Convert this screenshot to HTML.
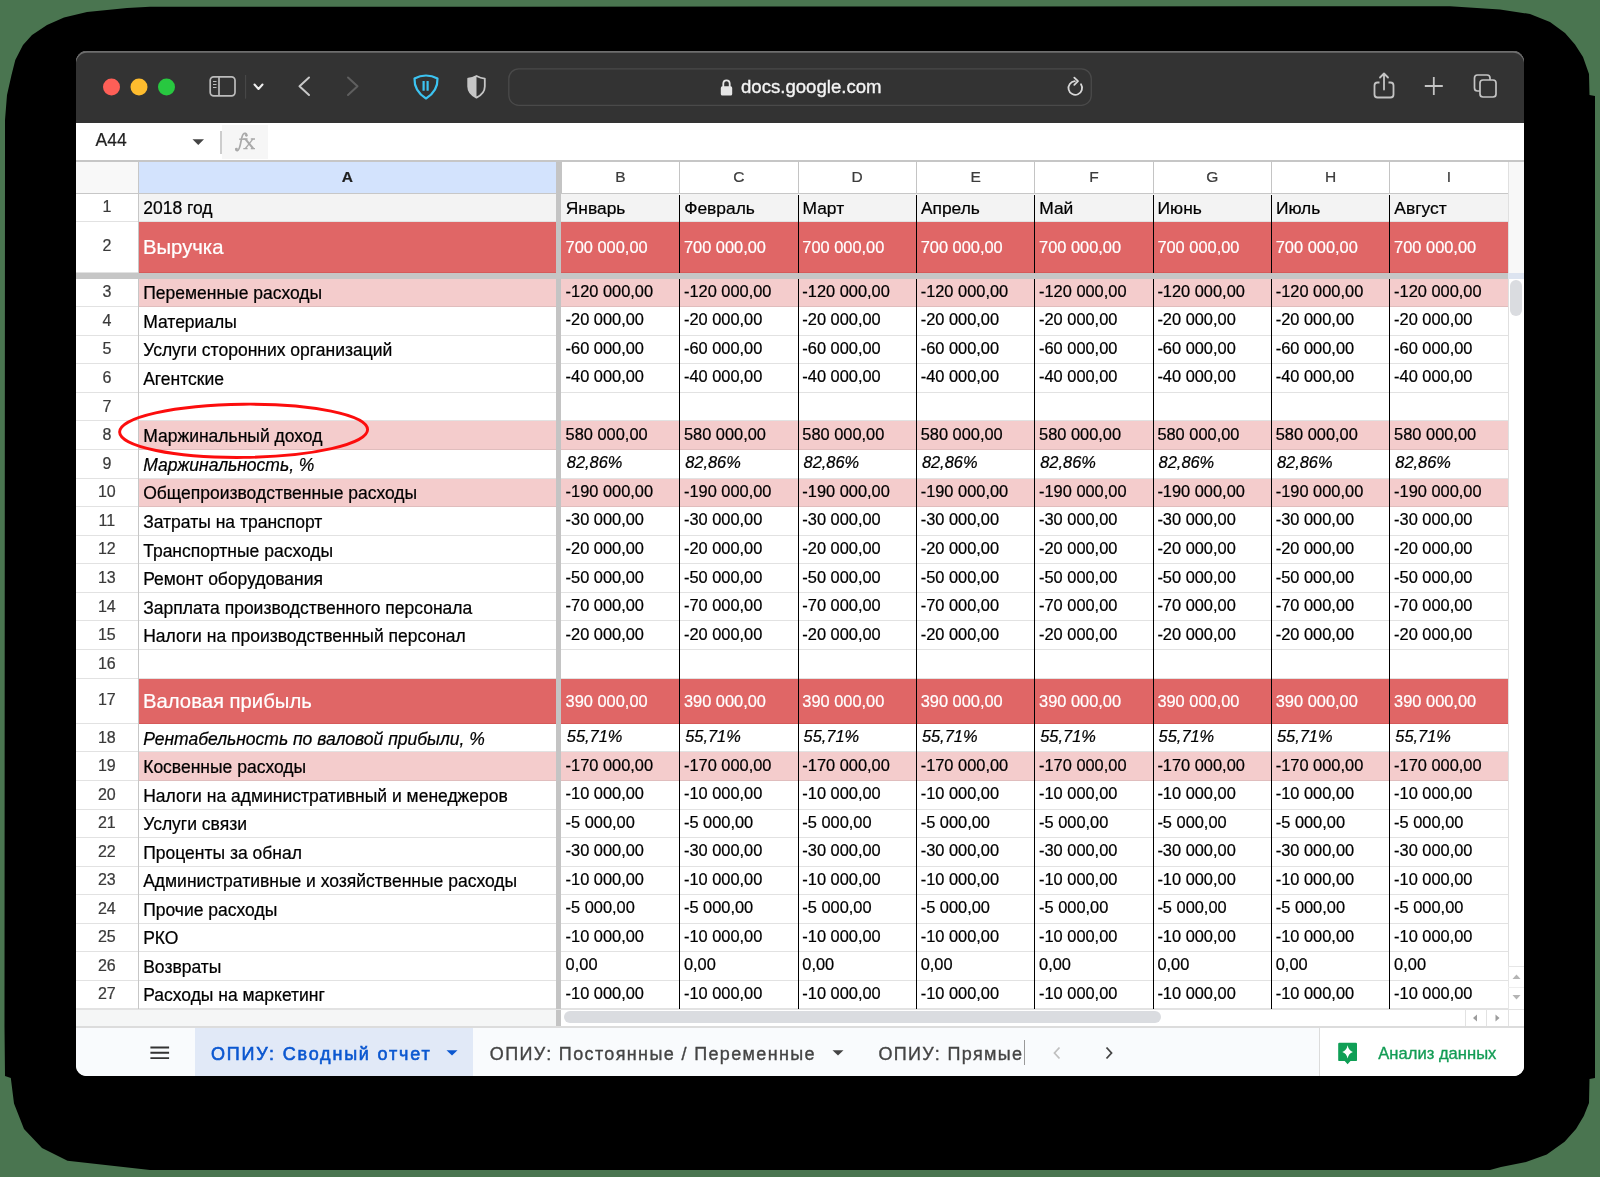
<!DOCTYPE html>
<html><head><meta charset="utf-8"><style>
html,body{margin:0;padding:0;}
body{width:1600px;height:1177px;position:relative;overflow:hidden;background:#4a7550;font-family:"Liberation Sans",sans-serif;}
body div{position:absolute;}
.shadow{left:4px;top:7px;right:5px;bottom:6px;background:#000;border-radius:88px;}
.win{left:76px;top:51px;width:1448px;height:1025px;background:#fff;border-radius:11px;}
#root{left:0;top:0;width:1600px;height:1177px;will-change:transform;}
.t{white-space:nowrap;-webkit-text-stroke:0.22px currentColor;}
.c{text-align:center;}
</style></head><body><div id="root">
<svg style="position:absolute;left:0;top:0" width="1600" height="1177"><path d="M5 150 L5 120 L7 95 L11.5 75 L15.3 60 L23 45 L32 35 L47 25 L64 17.5 L87 12 L127 8 L150 6.8 L1450 6.2 L1500 9.5 L1530 14 L1550 22 L1565 33 L1575 44.6 L1583 57 L1589 74 L1589.5 95 L1595 96 L1595 1078 L1589.5 1079 L1589 1103 L1583.8 1116 L1576 1129 L1564.6 1141.7 L1546.8 1154.4 L1526 1162 L1501 1167 L1490 1170 L150 1170 L67.5 1160.8 L42 1148 L24 1129 L14 1103.5 L10.8 1078 L5 1076 L4.5 1027Z" fill="#000"/></svg>
<div class="win"></div>
<div style="left:76.00px;top:51.30px;width:1448.00px;height:71.70px;background:#333;border-radius:11px 11px 0 0;box-shadow:inset 0 1.7px 0 #6e6e6e;"></div>
<div style="left:76.00px;top:123.00px;width:1448.00px;height:38.00px;background:#fff;"></div>
<div class="t" style="left:95.5px;top:132.49px;font-size:17.5px;line-height:17.5px;color:#1f1f1f;">A44</div>
<svg style="position:absolute;left:192px;top:138.5px" width="13" height="7"><path d="M0.5 0.3 L12 0.3 L6.25 6Z" fill="#444"/></svg>
<div style="left:220.30px;top:130.50px;width:1.90px;height:23.50px;background:#cdcdcd;"></div>
<div style="left:222.00px;top:125.00px;width:46.00px;height:33.60px;background:#f6f6f6;"></div>
<svg style="position:absolute;left:0;top:0" width="300" height="170"><path d="M246.6 135.6 C246.8 133.2 244.6 132.6 243.2 134.2 C242 135.6 241.6 138.6 240.7 142.8 C239.8 147 239.3 150.2 237.4 150.6 C236.4 150.8 235.6 150 236 149" stroke="#a9a9a9" stroke-width="1.7" fill="none" stroke-linecap="round"/><circle cx="246.3" cy="135.3" r="1.3" fill="#a9a9a9"/><circle cx="236.5" cy="149" r="1.3" fill="#a9a9a9"/><path d="M239.2 139.2 H244.8" stroke="#a9a9a9" stroke-width="1.4"/><path d="M245.2 138.9 L253.2 148.5" stroke="#a9a9a9" stroke-width="2"/><path d="M253 138.9 L245.4 148.5" stroke="#a9a9a9" stroke-width="1.3"/><path d="M243.3 139 H247.6 M250.8 139 H255 M243.3 148.6 H247.6 M250.8 148.6 H255" stroke="#a9a9a9" stroke-width="1.3"/></svg>
<div style="left:76.00px;top:160.20px;width:1448.00px;height:1.80px;background:#c6c6c6;"></div>
<div style="left:76.00px;top:162.00px;width:62.50px;height:32.00px;background:#f8f8f8;"></div>
<div style="left:138.50px;top:162.00px;width:417.50px;height:32.00px;background:#d3e3fd;"></div>
<div class="t c" style="left:138.5px;width:417.5px;top:169.08px;font-size:15.5px;line-height:15.5px;font-weight:bold;color:#1f1f1f;">A</div>
<div style="left:561.30px;top:162.00px;width:118.36px;height:32.00px;background:#fff;"></div>
<div class="t c" style="left:561.3px;width:118.36000000000001px;top:169.08px;font-size:15.5px;line-height:15.5px;color:#3c3c3c;">B</div>
<div style="left:679.66px;top:162.00px;width:118.36px;height:32.00px;background:#fff;"></div>
<div class="t c" style="left:679.66px;width:118.36000000000001px;top:169.08px;font-size:15.5px;line-height:15.5px;color:#3c3c3c;">C</div>
<div style="left:798.02px;top:162.00px;width:118.36px;height:32.00px;background:#fff;"></div>
<div class="t c" style="left:798.02px;width:118.3599999999999px;top:169.08px;font-size:15.5px;line-height:15.5px;color:#3c3c3c;">D</div>
<div style="left:916.38px;top:162.00px;width:118.36px;height:32.00px;background:#fff;"></div>
<div class="t c" style="left:916.3799999999999px;width:118.36000000000013px;top:169.08px;font-size:15.5px;line-height:15.5px;color:#3c3c3c;">E</div>
<div style="left:1034.74px;top:162.00px;width:118.36px;height:32.00px;background:#fff;"></div>
<div class="t c" style="left:1034.74px;width:118.3599999999999px;top:169.08px;font-size:15.5px;line-height:15.5px;color:#3c3c3c;">F</div>
<div style="left:1153.10px;top:162.00px;width:118.36px;height:32.00px;background:#fff;"></div>
<div class="t c" style="left:1153.1px;width:118.36000000000013px;top:169.08px;font-size:15.5px;line-height:15.5px;color:#3c3c3c;">G</div>
<div style="left:1271.46px;top:162.00px;width:118.36px;height:32.00px;background:#fff;"></div>
<div class="t c" style="left:1271.46px;width:118.3599999999999px;top:169.08px;font-size:15.5px;line-height:15.5px;color:#3c3c3c;">H</div>
<div style="left:1389.82px;top:162.00px;width:118.36px;height:32.00px;background:#fff;"></div>
<div class="t c" style="left:1389.82px;width:118.3599999999999px;top:169.08px;font-size:15.5px;line-height:15.5px;color:#3c3c3c;">I</div>
<div style="left:561.00px;top:161.00px;width:1.00px;height:33.00px;background:#c4c4c4;"></div>
<div style="left:679.00px;top:161.00px;width:1.00px;height:33.00px;background:#c4c4c4;"></div>
<div style="left:798.00px;top:161.00px;width:1.00px;height:33.00px;background:#c4c4c4;"></div>
<div style="left:916.00px;top:161.00px;width:1.00px;height:33.00px;background:#c4c4c4;"></div>
<div style="left:1034.00px;top:161.00px;width:1.00px;height:33.00px;background:#c4c4c4;"></div>
<div style="left:1153.00px;top:161.00px;width:1.00px;height:33.00px;background:#c4c4c4;"></div>
<div style="left:1271.00px;top:161.00px;width:1.00px;height:33.00px;background:#c4c4c4;"></div>
<div style="left:1389.00px;top:161.00px;width:1.00px;height:33.00px;background:#c4c4c4;"></div>
<div style="left:1508.00px;top:161.00px;width:1.00px;height:33.00px;background:#c4c4c4;"></div>
<div style="left:1508.18px;top:162.00px;width:15.82px;height:32.00px;background:#f8f8f8;"></div>
<div style="left:76.00px;top:193.20px;width:1432.18px;height:1.60px;background:#c7c7c7;"></div>
<div style="left:76.00px;top:194.00px;width:62.50px;height:28.00px;background:#fff;"></div>
<div class="t c" style="left:75.2px;width:63.3px;top:199.16px;font-size:16px;line-height:16px;color:#3a3a3a;">1</div>
<div style="left:138.50px;top:194.00px;width:1369.68px;height:28.00px;background:#f3f3f3;"></div>
<div style="left:76.00px;top:221.00px;width:62.50px;height:1.00px;background:#e2e2e2;"></div>
<div style="left:138.50px;top:221.00px;width:1369.68px;height:1.00px;background:#e2e2e2;"></div>
<div class="t" style="left:143.2px;top:200.19px;font-size:17.5px;line-height:17.5px;color:#000;">2018 год</div>
<div class="t" style="left:565.8px;top:199.97px;font-size:17.4px;line-height:17.4px;color:#000;">Январь</div>
<div class="t" style="left:684.16px;top:199.97px;font-size:17.4px;line-height:17.4px;color:#000;">Февраль</div>
<div class="t" style="left:802.52px;top:199.97px;font-size:17.4px;line-height:17.4px;color:#000;">Март</div>
<div class="t" style="left:920.8799999999999px;top:199.97px;font-size:17.4px;line-height:17.4px;color:#000;">Апрель</div>
<div class="t" style="left:1039.24px;top:199.97px;font-size:17.4px;line-height:17.4px;color:#000;">Май</div>
<div class="t" style="left:1157.6px;top:199.97px;font-size:17.4px;line-height:17.4px;color:#000;">Июнь</div>
<div class="t" style="left:1275.96px;top:199.97px;font-size:17.4px;line-height:17.4px;color:#000;">Июль</div>
<div class="t" style="left:1394.32px;top:199.97px;font-size:17.4px;line-height:17.4px;color:#000;">Август</div>
<div style="left:76.00px;top:222.00px;width:62.50px;height:51.00px;background:#fff;"></div>
<div class="t c" style="left:75.2px;width:63.3px;top:238.06px;font-size:16px;line-height:16px;color:#3a3a3a;">2</div>
<div style="left:138.50px;top:222.00px;width:1369.68px;height:51.00px;background:#e06666;"></div>
<div style="left:76.00px;top:272.00px;width:62.50px;height:1.00px;background:#e2e2e2;"></div>
<div style="left:138.50px;top:272.00px;width:1369.68px;height:1.00px;background:#d65a5a;"></div>
<div class="t" style="left:143px;top:237.02px;font-size:20.3px;line-height:20.3px;color:#fff;">Выручка</div>
<div class="t" style="left:565.5999999999999px;top:239.12px;font-size:16.4px;line-height:16.4px;color:#fff;">700 000,00</div>
<div class="t" style="left:683.9599999999999px;top:239.12px;font-size:16.4px;line-height:16.4px;color:#fff;">700 000,00</div>
<div class="t" style="left:802.3199999999999px;top:239.12px;font-size:16.4px;line-height:16.4px;color:#fff;">700 000,00</div>
<div class="t" style="left:920.6799999999998px;top:239.12px;font-size:16.4px;line-height:16.4px;color:#fff;">700 000,00</div>
<div class="t" style="left:1039.04px;top:239.12px;font-size:16.4px;line-height:16.4px;color:#fff;">700 000,00</div>
<div class="t" style="left:1157.3999999999999px;top:239.12px;font-size:16.4px;line-height:16.4px;color:#fff;">700 000,00</div>
<div class="t" style="left:1275.76px;top:239.12px;font-size:16.4px;line-height:16.4px;color:#fff;">700 000,00</div>
<div class="t" style="left:1394.12px;top:239.12px;font-size:16.4px;line-height:16.4px;color:#fff;">700 000,00</div>
<div style="left:76.00px;top:278.41px;width:62.50px;height:28.59px;background:#fff;"></div>
<div class="t c" style="left:75.2px;width:63.3px;top:284.16px;font-size:16px;line-height:16px;color:#3a3a3a;">3</div>
<div style="left:138.50px;top:278.41px;width:1369.68px;height:28.59px;background:#f4cccc;"></div>
<div style="left:76.00px;top:306.00px;width:62.50px;height:1.00px;background:#e2e2e2;"></div>
<div style="left:138.50px;top:306.00px;width:1369.68px;height:1.00px;background:#e0bdbd;"></div>
<div class="t" style="left:143.2px;top:285.19px;font-size:17.5px;line-height:17.5px;color:#000;">Переменные расходы</div>
<div class="t" style="left:565.5999999999999px;top:282.72px;font-size:16.4px;line-height:16.4px;color:#000;">-120 000,00</div>
<div class="t" style="left:683.9599999999999px;top:282.72px;font-size:16.4px;line-height:16.4px;color:#000;">-120 000,00</div>
<div class="t" style="left:802.3199999999999px;top:282.72px;font-size:16.4px;line-height:16.4px;color:#000;">-120 000,00</div>
<div class="t" style="left:920.6799999999998px;top:282.72px;font-size:16.4px;line-height:16.4px;color:#000;">-120 000,00</div>
<div class="t" style="left:1039.04px;top:282.72px;font-size:16.4px;line-height:16.4px;color:#000;">-120 000,00</div>
<div class="t" style="left:1157.3999999999999px;top:282.72px;font-size:16.4px;line-height:16.4px;color:#000;">-120 000,00</div>
<div class="t" style="left:1275.76px;top:282.72px;font-size:16.4px;line-height:16.4px;color:#000;">-120 000,00</div>
<div class="t" style="left:1394.12px;top:282.72px;font-size:16.4px;line-height:16.4px;color:#000;">-120 000,00</div>
<div style="left:76.00px;top:307.00px;width:62.50px;height:28.59px;background:#fff;"></div>
<div class="t c" style="left:75.2px;width:63.3px;top:312.75px;font-size:16px;line-height:16px;color:#3a3a3a;">4</div>
<div style="left:138.50px;top:307.00px;width:1369.68px;height:28.59px;background:#ffffff;"></div>
<div style="left:76.00px;top:334.59px;width:62.50px;height:1.00px;background:#e2e2e2;"></div>
<div style="left:138.50px;top:334.59px;width:1369.68px;height:1.00px;background:#e2e2e2;"></div>
<div class="t" style="left:143.2px;top:313.78px;font-size:17.5px;line-height:17.5px;color:#000;">Материалы</div>
<div class="t" style="left:565.5999999999999px;top:311.31px;font-size:16.4px;line-height:16.4px;color:#000;">-20 000,00</div>
<div class="t" style="left:683.9599999999999px;top:311.31px;font-size:16.4px;line-height:16.4px;color:#000;">-20 000,00</div>
<div class="t" style="left:802.3199999999999px;top:311.31px;font-size:16.4px;line-height:16.4px;color:#000;">-20 000,00</div>
<div class="t" style="left:920.6799999999998px;top:311.31px;font-size:16.4px;line-height:16.4px;color:#000;">-20 000,00</div>
<div class="t" style="left:1039.04px;top:311.31px;font-size:16.4px;line-height:16.4px;color:#000;">-20 000,00</div>
<div class="t" style="left:1157.3999999999999px;top:311.31px;font-size:16.4px;line-height:16.4px;color:#000;">-20 000,00</div>
<div class="t" style="left:1275.76px;top:311.31px;font-size:16.4px;line-height:16.4px;color:#000;">-20 000,00</div>
<div class="t" style="left:1394.12px;top:311.31px;font-size:16.4px;line-height:16.4px;color:#000;">-20 000,00</div>
<div style="left:76.00px;top:335.59px;width:62.50px;height:28.59px;background:#fff;"></div>
<div class="t c" style="left:75.2px;width:63.3px;top:341.34px;font-size:16px;line-height:16px;color:#3a3a3a;">5</div>
<div style="left:138.50px;top:335.59px;width:1369.68px;height:28.59px;background:#ffffff;"></div>
<div style="left:76.00px;top:363.18px;width:62.50px;height:1.00px;background:#e2e2e2;"></div>
<div style="left:138.50px;top:363.18px;width:1369.68px;height:1.00px;background:#e2e2e2;"></div>
<div class="t" style="left:143.2px;top:342.37px;font-size:17.5px;line-height:17.5px;color:#000;">Услуги сторонних организаций</div>
<div class="t" style="left:565.5999999999999px;top:339.90px;font-size:16.4px;line-height:16.4px;color:#000;">-60 000,00</div>
<div class="t" style="left:683.9599999999999px;top:339.90px;font-size:16.4px;line-height:16.4px;color:#000;">-60 000,00</div>
<div class="t" style="left:802.3199999999999px;top:339.90px;font-size:16.4px;line-height:16.4px;color:#000;">-60 000,00</div>
<div class="t" style="left:920.6799999999998px;top:339.90px;font-size:16.4px;line-height:16.4px;color:#000;">-60 000,00</div>
<div class="t" style="left:1039.04px;top:339.90px;font-size:16.4px;line-height:16.4px;color:#000;">-60 000,00</div>
<div class="t" style="left:1157.3999999999999px;top:339.90px;font-size:16.4px;line-height:16.4px;color:#000;">-60 000,00</div>
<div class="t" style="left:1275.76px;top:339.90px;font-size:16.4px;line-height:16.4px;color:#000;">-60 000,00</div>
<div class="t" style="left:1394.12px;top:339.90px;font-size:16.4px;line-height:16.4px;color:#000;">-60 000,00</div>
<div style="left:76.00px;top:364.18px;width:62.50px;height:28.59px;background:#fff;"></div>
<div class="t c" style="left:75.2px;width:63.3px;top:369.93px;font-size:16px;line-height:16px;color:#3a3a3a;">6</div>
<div style="left:138.50px;top:364.18px;width:1369.68px;height:28.59px;background:#ffffff;"></div>
<div style="left:76.00px;top:391.77px;width:62.50px;height:1.00px;background:#e2e2e2;"></div>
<div style="left:138.50px;top:391.77px;width:1369.68px;height:1.00px;background:#e2e2e2;"></div>
<div class="t" style="left:143.2px;top:370.96px;font-size:17.5px;line-height:17.5px;color:#000;">Агентские</div>
<div class="t" style="left:565.5999999999999px;top:368.49px;font-size:16.4px;line-height:16.4px;color:#000;">-40 000,00</div>
<div class="t" style="left:683.9599999999999px;top:368.49px;font-size:16.4px;line-height:16.4px;color:#000;">-40 000,00</div>
<div class="t" style="left:802.3199999999999px;top:368.49px;font-size:16.4px;line-height:16.4px;color:#000;">-40 000,00</div>
<div class="t" style="left:920.6799999999998px;top:368.49px;font-size:16.4px;line-height:16.4px;color:#000;">-40 000,00</div>
<div class="t" style="left:1039.04px;top:368.49px;font-size:16.4px;line-height:16.4px;color:#000;">-40 000,00</div>
<div class="t" style="left:1157.3999999999999px;top:368.49px;font-size:16.4px;line-height:16.4px;color:#000;">-40 000,00</div>
<div class="t" style="left:1275.76px;top:368.49px;font-size:16.4px;line-height:16.4px;color:#000;">-40 000,00</div>
<div class="t" style="left:1394.12px;top:368.49px;font-size:16.4px;line-height:16.4px;color:#000;">-40 000,00</div>
<div style="left:76.00px;top:392.77px;width:62.50px;height:28.59px;background:#fff;"></div>
<div class="t c" style="left:75.2px;width:63.3px;top:398.52px;font-size:16px;line-height:16px;color:#3a3a3a;">7</div>
<div style="left:138.50px;top:392.77px;width:1369.68px;height:28.59px;background:#ffffff;"></div>
<div style="left:76.00px;top:420.36px;width:62.50px;height:1.00px;background:#e2e2e2;"></div>
<div style="left:138.50px;top:420.36px;width:1369.68px;height:1.00px;background:#e2e2e2;"></div>
<div class="t" style="left:143.2px;top:399.55px;font-size:17.5px;line-height:17.5px;color:#000;"></div>
<div class="t" style="left:565.5999999999999px;top:397.08px;font-size:16.4px;line-height:16.4px;color:#000;"></div>
<div class="t" style="left:683.9599999999999px;top:397.08px;font-size:16.4px;line-height:16.4px;color:#000;"></div>
<div class="t" style="left:802.3199999999999px;top:397.08px;font-size:16.4px;line-height:16.4px;color:#000;"></div>
<div class="t" style="left:920.6799999999998px;top:397.08px;font-size:16.4px;line-height:16.4px;color:#000;"></div>
<div class="t" style="left:1039.04px;top:397.08px;font-size:16.4px;line-height:16.4px;color:#000;"></div>
<div class="t" style="left:1157.3999999999999px;top:397.08px;font-size:16.4px;line-height:16.4px;color:#000;"></div>
<div class="t" style="left:1275.76px;top:397.08px;font-size:16.4px;line-height:16.4px;color:#000;"></div>
<div class="t" style="left:1394.12px;top:397.08px;font-size:16.4px;line-height:16.4px;color:#000;"></div>
<div style="left:76.00px;top:421.36px;width:62.50px;height:28.59px;background:#fff;"></div>
<div class="t c" style="left:75.2px;width:63.3px;top:427.11px;font-size:16px;line-height:16px;color:#3a3a3a;">8</div>
<div style="left:138.50px;top:421.36px;width:1369.68px;height:28.59px;background:#f4cccc;"></div>
<div style="left:76.00px;top:448.95px;width:62.50px;height:1.00px;background:#e2e2e2;"></div>
<div style="left:138.50px;top:448.95px;width:1369.68px;height:1.00px;background:#e0bdbd;"></div>
<div class="t" style="left:143.2px;top:428.14px;font-size:17.5px;line-height:17.5px;color:#000;">Маржинальный доход</div>
<div class="t" style="left:565.5999999999999px;top:425.67px;font-size:16.4px;line-height:16.4px;color:#000;">580 000,00</div>
<div class="t" style="left:683.9599999999999px;top:425.67px;font-size:16.4px;line-height:16.4px;color:#000;">580 000,00</div>
<div class="t" style="left:802.3199999999999px;top:425.67px;font-size:16.4px;line-height:16.4px;color:#000;">580 000,00</div>
<div class="t" style="left:920.6799999999998px;top:425.67px;font-size:16.4px;line-height:16.4px;color:#000;">580 000,00</div>
<div class="t" style="left:1039.04px;top:425.67px;font-size:16.4px;line-height:16.4px;color:#000;">580 000,00</div>
<div class="t" style="left:1157.3999999999999px;top:425.67px;font-size:16.4px;line-height:16.4px;color:#000;">580 000,00</div>
<div class="t" style="left:1275.76px;top:425.67px;font-size:16.4px;line-height:16.4px;color:#000;">580 000,00</div>
<div class="t" style="left:1394.12px;top:425.67px;font-size:16.4px;line-height:16.4px;color:#000;">580 000,00</div>
<div style="left:76.00px;top:449.95px;width:62.50px;height:28.59px;background:#fff;"></div>
<div class="t c" style="left:75.2px;width:63.3px;top:455.70px;font-size:16px;line-height:16px;color:#3a3a3a;">9</div>
<div style="left:138.50px;top:449.95px;width:1369.68px;height:28.59px;background:#ffffff;"></div>
<div style="left:76.00px;top:477.54px;width:62.50px;height:1.00px;background:#e2e2e2;"></div>
<div style="left:138.50px;top:477.54px;width:1369.68px;height:1.00px;background:#e2e2e2;"></div>
<div class="t" style="left:143.2px;top:456.73px;font-size:17.5px;line-height:17.5px;color:#000;font-style:italic;">Маржинальность, %</div>
<div class="t" style="left:566.8px;top:454.16px;font-size:16.4px;line-height:16.4px;color:#000;font-style:italic;">82,86%</div>
<div class="t" style="left:685.16px;top:454.16px;font-size:16.4px;line-height:16.4px;color:#000;font-style:italic;">82,86%</div>
<div class="t" style="left:803.52px;top:454.16px;font-size:16.4px;line-height:16.4px;color:#000;font-style:italic;">82,86%</div>
<div class="t" style="left:921.8799999999999px;top:454.16px;font-size:16.4px;line-height:16.4px;color:#000;font-style:italic;">82,86%</div>
<div class="t" style="left:1040.24px;top:454.16px;font-size:16.4px;line-height:16.4px;color:#000;font-style:italic;">82,86%</div>
<div class="t" style="left:1158.6px;top:454.16px;font-size:16.4px;line-height:16.4px;color:#000;font-style:italic;">82,86%</div>
<div class="t" style="left:1276.96px;top:454.16px;font-size:16.4px;line-height:16.4px;color:#000;font-style:italic;">82,86%</div>
<div class="t" style="left:1395.32px;top:454.16px;font-size:16.4px;line-height:16.4px;color:#000;font-style:italic;">82,86%</div>
<div style="left:76.00px;top:478.54px;width:62.50px;height:28.59px;background:#fff;"></div>
<div class="t c" style="left:75.2px;width:63.3px;top:484.29px;font-size:16px;line-height:16px;color:#3a3a3a;">10</div>
<div style="left:138.50px;top:478.54px;width:1369.68px;height:28.59px;background:#f4cccc;"></div>
<div style="left:76.00px;top:506.13px;width:62.50px;height:1.00px;background:#e2e2e2;"></div>
<div style="left:138.50px;top:506.13px;width:1369.68px;height:1.00px;background:#e0bdbd;"></div>
<div class="t" style="left:143.2px;top:485.32px;font-size:17.5px;line-height:17.5px;color:#000;">Общепроизводственные расходы</div>
<div class="t" style="left:565.5999999999999px;top:482.85px;font-size:16.4px;line-height:16.4px;color:#000;">-190 000,00</div>
<div class="t" style="left:683.9599999999999px;top:482.85px;font-size:16.4px;line-height:16.4px;color:#000;">-190 000,00</div>
<div class="t" style="left:802.3199999999999px;top:482.85px;font-size:16.4px;line-height:16.4px;color:#000;">-190 000,00</div>
<div class="t" style="left:920.6799999999998px;top:482.85px;font-size:16.4px;line-height:16.4px;color:#000;">-190 000,00</div>
<div class="t" style="left:1039.04px;top:482.85px;font-size:16.4px;line-height:16.4px;color:#000;">-190 000,00</div>
<div class="t" style="left:1157.3999999999999px;top:482.85px;font-size:16.4px;line-height:16.4px;color:#000;">-190 000,00</div>
<div class="t" style="left:1275.76px;top:482.85px;font-size:16.4px;line-height:16.4px;color:#000;">-190 000,00</div>
<div class="t" style="left:1394.12px;top:482.85px;font-size:16.4px;line-height:16.4px;color:#000;">-190 000,00</div>
<div style="left:76.00px;top:507.13px;width:62.50px;height:28.59px;background:#fff;"></div>
<div class="t c" style="left:75.2px;width:63.3px;top:512.88px;font-size:16px;line-height:16px;color:#3a3a3a;">11</div>
<div style="left:138.50px;top:507.13px;width:1369.68px;height:28.59px;background:#ffffff;"></div>
<div style="left:76.00px;top:534.72px;width:62.50px;height:1.00px;background:#e2e2e2;"></div>
<div style="left:138.50px;top:534.72px;width:1369.68px;height:1.00px;background:#e2e2e2;"></div>
<div class="t" style="left:143.2px;top:513.91px;font-size:17.5px;line-height:17.5px;color:#000;">Затраты на транспорт</div>
<div class="t" style="left:565.5999999999999px;top:511.44px;font-size:16.4px;line-height:16.4px;color:#000;">-30 000,00</div>
<div class="t" style="left:683.9599999999999px;top:511.44px;font-size:16.4px;line-height:16.4px;color:#000;">-30 000,00</div>
<div class="t" style="left:802.3199999999999px;top:511.44px;font-size:16.4px;line-height:16.4px;color:#000;">-30 000,00</div>
<div class="t" style="left:920.6799999999998px;top:511.44px;font-size:16.4px;line-height:16.4px;color:#000;">-30 000,00</div>
<div class="t" style="left:1039.04px;top:511.44px;font-size:16.4px;line-height:16.4px;color:#000;">-30 000,00</div>
<div class="t" style="left:1157.3999999999999px;top:511.44px;font-size:16.4px;line-height:16.4px;color:#000;">-30 000,00</div>
<div class="t" style="left:1275.76px;top:511.44px;font-size:16.4px;line-height:16.4px;color:#000;">-30 000,00</div>
<div class="t" style="left:1394.12px;top:511.44px;font-size:16.4px;line-height:16.4px;color:#000;">-30 000,00</div>
<div style="left:76.00px;top:535.72px;width:62.50px;height:28.59px;background:#fff;"></div>
<div class="t c" style="left:75.2px;width:63.3px;top:541.47px;font-size:16px;line-height:16px;color:#3a3a3a;">12</div>
<div style="left:138.50px;top:535.72px;width:1369.68px;height:28.59px;background:#ffffff;"></div>
<div style="left:76.00px;top:563.31px;width:62.50px;height:1.00px;background:#e2e2e2;"></div>
<div style="left:138.50px;top:563.31px;width:1369.68px;height:1.00px;background:#e2e2e2;"></div>
<div class="t" style="left:143.2px;top:542.50px;font-size:17.5px;line-height:17.5px;color:#000;">Транспортные расходы</div>
<div class="t" style="left:565.5999999999999px;top:540.03px;font-size:16.4px;line-height:16.4px;color:#000;">-20 000,00</div>
<div class="t" style="left:683.9599999999999px;top:540.03px;font-size:16.4px;line-height:16.4px;color:#000;">-20 000,00</div>
<div class="t" style="left:802.3199999999999px;top:540.03px;font-size:16.4px;line-height:16.4px;color:#000;">-20 000,00</div>
<div class="t" style="left:920.6799999999998px;top:540.03px;font-size:16.4px;line-height:16.4px;color:#000;">-20 000,00</div>
<div class="t" style="left:1039.04px;top:540.03px;font-size:16.4px;line-height:16.4px;color:#000;">-20 000,00</div>
<div class="t" style="left:1157.3999999999999px;top:540.03px;font-size:16.4px;line-height:16.4px;color:#000;">-20 000,00</div>
<div class="t" style="left:1275.76px;top:540.03px;font-size:16.4px;line-height:16.4px;color:#000;">-20 000,00</div>
<div class="t" style="left:1394.12px;top:540.03px;font-size:16.4px;line-height:16.4px;color:#000;">-20 000,00</div>
<div style="left:76.00px;top:564.31px;width:62.50px;height:28.59px;background:#fff;"></div>
<div class="t c" style="left:75.2px;width:63.3px;top:570.06px;font-size:16px;line-height:16px;color:#3a3a3a;">13</div>
<div style="left:138.50px;top:564.31px;width:1369.68px;height:28.59px;background:#ffffff;"></div>
<div style="left:76.00px;top:591.90px;width:62.50px;height:1.00px;background:#e2e2e2;"></div>
<div style="left:138.50px;top:591.90px;width:1369.68px;height:1.00px;background:#e2e2e2;"></div>
<div class="t" style="left:143.2px;top:571.09px;font-size:17.5px;line-height:17.5px;color:#000;">Ремонт оборудования</div>
<div class="t" style="left:565.5999999999999px;top:568.62px;font-size:16.4px;line-height:16.4px;color:#000;">-50 000,00</div>
<div class="t" style="left:683.9599999999999px;top:568.62px;font-size:16.4px;line-height:16.4px;color:#000;">-50 000,00</div>
<div class="t" style="left:802.3199999999999px;top:568.62px;font-size:16.4px;line-height:16.4px;color:#000;">-50 000,00</div>
<div class="t" style="left:920.6799999999998px;top:568.62px;font-size:16.4px;line-height:16.4px;color:#000;">-50 000,00</div>
<div class="t" style="left:1039.04px;top:568.62px;font-size:16.4px;line-height:16.4px;color:#000;">-50 000,00</div>
<div class="t" style="left:1157.3999999999999px;top:568.62px;font-size:16.4px;line-height:16.4px;color:#000;">-50 000,00</div>
<div class="t" style="left:1275.76px;top:568.62px;font-size:16.4px;line-height:16.4px;color:#000;">-50 000,00</div>
<div class="t" style="left:1394.12px;top:568.62px;font-size:16.4px;line-height:16.4px;color:#000;">-50 000,00</div>
<div style="left:76.00px;top:592.90px;width:62.50px;height:28.59px;background:#fff;"></div>
<div class="t c" style="left:75.2px;width:63.3px;top:598.65px;font-size:16px;line-height:16px;color:#3a3a3a;">14</div>
<div style="left:138.50px;top:592.90px;width:1369.68px;height:28.59px;background:#ffffff;"></div>
<div style="left:76.00px;top:620.49px;width:62.50px;height:1.00px;background:#e2e2e2;"></div>
<div style="left:138.50px;top:620.49px;width:1369.68px;height:1.00px;background:#e2e2e2;"></div>
<div class="t" style="left:143.2px;top:599.68px;font-size:17.5px;line-height:17.5px;color:#000;">Зарплата производственного персонала</div>
<div class="t" style="left:565.5999999999999px;top:597.21px;font-size:16.4px;line-height:16.4px;color:#000;">-70 000,00</div>
<div class="t" style="left:683.9599999999999px;top:597.21px;font-size:16.4px;line-height:16.4px;color:#000;">-70 000,00</div>
<div class="t" style="left:802.3199999999999px;top:597.21px;font-size:16.4px;line-height:16.4px;color:#000;">-70 000,00</div>
<div class="t" style="left:920.6799999999998px;top:597.21px;font-size:16.4px;line-height:16.4px;color:#000;">-70 000,00</div>
<div class="t" style="left:1039.04px;top:597.21px;font-size:16.4px;line-height:16.4px;color:#000;">-70 000,00</div>
<div class="t" style="left:1157.3999999999999px;top:597.21px;font-size:16.4px;line-height:16.4px;color:#000;">-70 000,00</div>
<div class="t" style="left:1275.76px;top:597.21px;font-size:16.4px;line-height:16.4px;color:#000;">-70 000,00</div>
<div class="t" style="left:1394.12px;top:597.21px;font-size:16.4px;line-height:16.4px;color:#000;">-70 000,00</div>
<div style="left:76.00px;top:621.49px;width:62.50px;height:28.59px;background:#fff;"></div>
<div class="t c" style="left:75.2px;width:63.3px;top:627.24px;font-size:16px;line-height:16px;color:#3a3a3a;">15</div>
<div style="left:138.50px;top:621.49px;width:1369.68px;height:28.59px;background:#ffffff;"></div>
<div style="left:76.00px;top:649.08px;width:62.50px;height:1.00px;background:#e2e2e2;"></div>
<div style="left:138.50px;top:649.08px;width:1369.68px;height:1.00px;background:#e2e2e2;"></div>
<div class="t" style="left:143.2px;top:628.27px;font-size:17.5px;line-height:17.5px;color:#000;">Налоги на производственный персонал</div>
<div class="t" style="left:565.5999999999999px;top:625.80px;font-size:16.4px;line-height:16.4px;color:#000;">-20 000,00</div>
<div class="t" style="left:683.9599999999999px;top:625.80px;font-size:16.4px;line-height:16.4px;color:#000;">-20 000,00</div>
<div class="t" style="left:802.3199999999999px;top:625.80px;font-size:16.4px;line-height:16.4px;color:#000;">-20 000,00</div>
<div class="t" style="left:920.6799999999998px;top:625.80px;font-size:16.4px;line-height:16.4px;color:#000;">-20 000,00</div>
<div class="t" style="left:1039.04px;top:625.80px;font-size:16.4px;line-height:16.4px;color:#000;">-20 000,00</div>
<div class="t" style="left:1157.3999999999999px;top:625.80px;font-size:16.4px;line-height:16.4px;color:#000;">-20 000,00</div>
<div class="t" style="left:1275.76px;top:625.80px;font-size:16.4px;line-height:16.4px;color:#000;">-20 000,00</div>
<div class="t" style="left:1394.12px;top:625.80px;font-size:16.4px;line-height:16.4px;color:#000;">-20 000,00</div>
<div style="left:76.00px;top:650.08px;width:62.50px;height:28.59px;background:#fff;"></div>
<div class="t c" style="left:75.2px;width:63.3px;top:655.83px;font-size:16px;line-height:16px;color:#3a3a3a;">16</div>
<div style="left:138.50px;top:650.08px;width:1369.68px;height:28.59px;background:#ffffff;"></div>
<div style="left:76.00px;top:677.67px;width:62.50px;height:1.00px;background:#e2e2e2;"></div>
<div style="left:138.50px;top:677.67px;width:1369.68px;height:1.00px;background:#e2e2e2;"></div>
<div class="t" style="left:143.2px;top:656.86px;font-size:17.5px;line-height:17.5px;color:#000;"></div>
<div class="t" style="left:565.5999999999999px;top:654.39px;font-size:16.4px;line-height:16.4px;color:#000;"></div>
<div class="t" style="left:683.9599999999999px;top:654.39px;font-size:16.4px;line-height:16.4px;color:#000;"></div>
<div class="t" style="left:802.3199999999999px;top:654.39px;font-size:16.4px;line-height:16.4px;color:#000;"></div>
<div class="t" style="left:920.6799999999998px;top:654.39px;font-size:16.4px;line-height:16.4px;color:#000;"></div>
<div class="t" style="left:1039.04px;top:654.39px;font-size:16.4px;line-height:16.4px;color:#000;"></div>
<div class="t" style="left:1157.3999999999999px;top:654.39px;font-size:16.4px;line-height:16.4px;color:#000;"></div>
<div class="t" style="left:1275.76px;top:654.39px;font-size:16.4px;line-height:16.4px;color:#000;"></div>
<div class="t" style="left:1394.12px;top:654.39px;font-size:16.4px;line-height:16.4px;color:#000;"></div>
<div style="left:76.00px;top:678.67px;width:62.50px;height:45.23px;background:#fff;"></div>
<div class="t c" style="left:75.2px;width:63.3px;top:691.84px;font-size:16px;line-height:16px;color:#3a3a3a;">17</div>
<div style="left:138.50px;top:678.67px;width:1369.68px;height:45.23px;background:#e06666;"></div>
<div style="left:76.00px;top:722.90px;width:62.50px;height:1.00px;background:#e2e2e2;"></div>
<div style="left:138.50px;top:722.90px;width:1369.68px;height:1.00px;background:#d65a5a;"></div>
<div class="t" style="left:143px;top:690.80px;font-size:20.3px;line-height:20.3px;color:#fff;">Валовая прибыль</div>
<div class="t" style="left:565.5999999999999px;top:692.90px;font-size:16.4px;line-height:16.4px;color:#fff;">390 000,00</div>
<div class="t" style="left:683.9599999999999px;top:692.90px;font-size:16.4px;line-height:16.4px;color:#fff;">390 000,00</div>
<div class="t" style="left:802.3199999999999px;top:692.90px;font-size:16.4px;line-height:16.4px;color:#fff;">390 000,00</div>
<div class="t" style="left:920.6799999999998px;top:692.90px;font-size:16.4px;line-height:16.4px;color:#fff;">390 000,00</div>
<div class="t" style="left:1039.04px;top:692.90px;font-size:16.4px;line-height:16.4px;color:#fff;">390 000,00</div>
<div class="t" style="left:1157.3999999999999px;top:692.90px;font-size:16.4px;line-height:16.4px;color:#fff;">390 000,00</div>
<div class="t" style="left:1275.76px;top:692.90px;font-size:16.4px;line-height:16.4px;color:#fff;">390 000,00</div>
<div class="t" style="left:1394.12px;top:692.90px;font-size:16.4px;line-height:16.4px;color:#fff;">390 000,00</div>
<div style="left:76.00px;top:723.90px;width:62.50px;height:28.54px;background:#fff;"></div>
<div class="t c" style="left:75.2px;width:63.3px;top:729.60px;font-size:16px;line-height:16px;color:#3a3a3a;">18</div>
<div style="left:138.50px;top:723.90px;width:1369.68px;height:28.54px;background:#ffffff;"></div>
<div style="left:76.00px;top:751.44px;width:62.50px;height:1.00px;background:#e2e2e2;"></div>
<div style="left:138.50px;top:751.44px;width:1369.68px;height:1.00px;background:#e2e2e2;"></div>
<div class="t" style="left:143.2px;top:730.63px;font-size:17.5px;line-height:17.5px;color:#000;font-style:italic;">Рентабельность по валовой прибыли, %</div>
<div class="t" style="left:566.8px;top:728.06px;font-size:16.4px;line-height:16.4px;color:#000;font-style:italic;">55,71%</div>
<div class="t" style="left:685.16px;top:728.06px;font-size:16.4px;line-height:16.4px;color:#000;font-style:italic;">55,71%</div>
<div class="t" style="left:803.52px;top:728.06px;font-size:16.4px;line-height:16.4px;color:#000;font-style:italic;">55,71%</div>
<div class="t" style="left:921.8799999999999px;top:728.06px;font-size:16.4px;line-height:16.4px;color:#000;font-style:italic;">55,71%</div>
<div class="t" style="left:1040.24px;top:728.06px;font-size:16.4px;line-height:16.4px;color:#000;font-style:italic;">55,71%</div>
<div class="t" style="left:1158.6px;top:728.06px;font-size:16.4px;line-height:16.4px;color:#000;font-style:italic;">55,71%</div>
<div class="t" style="left:1276.96px;top:728.06px;font-size:16.4px;line-height:16.4px;color:#000;font-style:italic;">55,71%</div>
<div class="t" style="left:1395.32px;top:728.06px;font-size:16.4px;line-height:16.4px;color:#000;font-style:italic;">55,71%</div>
<div style="left:76.00px;top:752.44px;width:62.50px;height:28.54px;background:#fff;"></div>
<div class="t c" style="left:75.2px;width:63.3px;top:758.14px;font-size:16px;line-height:16px;color:#3a3a3a;">19</div>
<div style="left:138.50px;top:752.44px;width:1369.68px;height:28.54px;background:#f4cccc;"></div>
<div style="left:76.00px;top:779.98px;width:62.50px;height:1.00px;background:#e2e2e2;"></div>
<div style="left:138.50px;top:779.98px;width:1369.68px;height:1.00px;background:#e0bdbd;"></div>
<div class="t" style="left:143.2px;top:759.17px;font-size:17.5px;line-height:17.5px;color:#000;">Косвенные расходы</div>
<div class="t" style="left:565.5999999999999px;top:756.70px;font-size:16.4px;line-height:16.4px;color:#000;">-170 000,00</div>
<div class="t" style="left:683.9599999999999px;top:756.70px;font-size:16.4px;line-height:16.4px;color:#000;">-170 000,00</div>
<div class="t" style="left:802.3199999999999px;top:756.70px;font-size:16.4px;line-height:16.4px;color:#000;">-170 000,00</div>
<div class="t" style="left:920.6799999999998px;top:756.70px;font-size:16.4px;line-height:16.4px;color:#000;">-170 000,00</div>
<div class="t" style="left:1039.04px;top:756.70px;font-size:16.4px;line-height:16.4px;color:#000;">-170 000,00</div>
<div class="t" style="left:1157.3999999999999px;top:756.70px;font-size:16.4px;line-height:16.4px;color:#000;">-170 000,00</div>
<div class="t" style="left:1275.76px;top:756.70px;font-size:16.4px;line-height:16.4px;color:#000;">-170 000,00</div>
<div class="t" style="left:1394.12px;top:756.70px;font-size:16.4px;line-height:16.4px;color:#000;">-170 000,00</div>
<div style="left:76.00px;top:780.98px;width:62.50px;height:28.54px;background:#fff;"></div>
<div class="t c" style="left:75.2px;width:63.3px;top:786.68px;font-size:16px;line-height:16px;color:#3a3a3a;">20</div>
<div style="left:138.50px;top:780.98px;width:1369.68px;height:28.54px;background:#ffffff;"></div>
<div style="left:76.00px;top:808.52px;width:62.50px;height:1.00px;background:#e2e2e2;"></div>
<div style="left:138.50px;top:808.52px;width:1369.68px;height:1.00px;background:#e2e2e2;"></div>
<div class="t" style="left:143.2px;top:787.71px;font-size:17.5px;line-height:17.5px;color:#000;">Налоги на административный и менеджеров</div>
<div class="t" style="left:565.5999999999999px;top:785.24px;font-size:16.4px;line-height:16.4px;color:#000;">-10 000,00</div>
<div class="t" style="left:683.9599999999999px;top:785.24px;font-size:16.4px;line-height:16.4px;color:#000;">-10 000,00</div>
<div class="t" style="left:802.3199999999999px;top:785.24px;font-size:16.4px;line-height:16.4px;color:#000;">-10 000,00</div>
<div class="t" style="left:920.6799999999998px;top:785.24px;font-size:16.4px;line-height:16.4px;color:#000;">-10 000,00</div>
<div class="t" style="left:1039.04px;top:785.24px;font-size:16.4px;line-height:16.4px;color:#000;">-10 000,00</div>
<div class="t" style="left:1157.3999999999999px;top:785.24px;font-size:16.4px;line-height:16.4px;color:#000;">-10 000,00</div>
<div class="t" style="left:1275.76px;top:785.24px;font-size:16.4px;line-height:16.4px;color:#000;">-10 000,00</div>
<div class="t" style="left:1394.12px;top:785.24px;font-size:16.4px;line-height:16.4px;color:#000;">-10 000,00</div>
<div style="left:76.00px;top:809.52px;width:62.50px;height:28.54px;background:#fff;"></div>
<div class="t c" style="left:75.2px;width:63.3px;top:815.22px;font-size:16px;line-height:16px;color:#3a3a3a;">21</div>
<div style="left:138.50px;top:809.52px;width:1369.68px;height:28.54px;background:#ffffff;"></div>
<div style="left:76.00px;top:837.06px;width:62.50px;height:1.00px;background:#e2e2e2;"></div>
<div style="left:138.50px;top:837.06px;width:1369.68px;height:1.00px;background:#e2e2e2;"></div>
<div class="t" style="left:143.2px;top:816.25px;font-size:17.5px;line-height:17.5px;color:#000;">Услуги связи</div>
<div class="t" style="left:565.5999999999999px;top:813.78px;font-size:16.4px;line-height:16.4px;color:#000;">-5 000,00</div>
<div class="t" style="left:683.9599999999999px;top:813.78px;font-size:16.4px;line-height:16.4px;color:#000;">-5 000,00</div>
<div class="t" style="left:802.3199999999999px;top:813.78px;font-size:16.4px;line-height:16.4px;color:#000;">-5 000,00</div>
<div class="t" style="left:920.6799999999998px;top:813.78px;font-size:16.4px;line-height:16.4px;color:#000;">-5 000,00</div>
<div class="t" style="left:1039.04px;top:813.78px;font-size:16.4px;line-height:16.4px;color:#000;">-5 000,00</div>
<div class="t" style="left:1157.3999999999999px;top:813.78px;font-size:16.4px;line-height:16.4px;color:#000;">-5 000,00</div>
<div class="t" style="left:1275.76px;top:813.78px;font-size:16.4px;line-height:16.4px;color:#000;">-5 000,00</div>
<div class="t" style="left:1394.12px;top:813.78px;font-size:16.4px;line-height:16.4px;color:#000;">-5 000,00</div>
<div style="left:76.00px;top:838.06px;width:62.50px;height:28.54px;background:#fff;"></div>
<div class="t c" style="left:75.2px;width:63.3px;top:843.76px;font-size:16px;line-height:16px;color:#3a3a3a;">22</div>
<div style="left:138.50px;top:838.06px;width:1369.68px;height:28.54px;background:#ffffff;"></div>
<div style="left:76.00px;top:865.60px;width:62.50px;height:1.00px;background:#e2e2e2;"></div>
<div style="left:138.50px;top:865.60px;width:1369.68px;height:1.00px;background:#e2e2e2;"></div>
<div class="t" style="left:143.2px;top:844.79px;font-size:17.5px;line-height:17.5px;color:#000;">Проценты за обнал</div>
<div class="t" style="left:565.5999999999999px;top:842.32px;font-size:16.4px;line-height:16.4px;color:#000;">-30 000,00</div>
<div class="t" style="left:683.9599999999999px;top:842.32px;font-size:16.4px;line-height:16.4px;color:#000;">-30 000,00</div>
<div class="t" style="left:802.3199999999999px;top:842.32px;font-size:16.4px;line-height:16.4px;color:#000;">-30 000,00</div>
<div class="t" style="left:920.6799999999998px;top:842.32px;font-size:16.4px;line-height:16.4px;color:#000;">-30 000,00</div>
<div class="t" style="left:1039.04px;top:842.32px;font-size:16.4px;line-height:16.4px;color:#000;">-30 000,00</div>
<div class="t" style="left:1157.3999999999999px;top:842.32px;font-size:16.4px;line-height:16.4px;color:#000;">-30 000,00</div>
<div class="t" style="left:1275.76px;top:842.32px;font-size:16.4px;line-height:16.4px;color:#000;">-30 000,00</div>
<div class="t" style="left:1394.12px;top:842.32px;font-size:16.4px;line-height:16.4px;color:#000;">-30 000,00</div>
<div style="left:76.00px;top:866.60px;width:62.50px;height:28.54px;background:#fff;"></div>
<div class="t c" style="left:75.2px;width:63.3px;top:872.30px;font-size:16px;line-height:16px;color:#3a3a3a;">23</div>
<div style="left:138.50px;top:866.60px;width:1369.68px;height:28.54px;background:#ffffff;"></div>
<div style="left:76.00px;top:894.14px;width:62.50px;height:1.00px;background:#e2e2e2;"></div>
<div style="left:138.50px;top:894.14px;width:1369.68px;height:1.00px;background:#e2e2e2;"></div>
<div class="t" style="left:143.2px;top:873.33px;font-size:17.5px;line-height:17.5px;color:#000;">Административные и хозяйственные расходы</div>
<div class="t" style="left:565.5999999999999px;top:870.86px;font-size:16.4px;line-height:16.4px;color:#000;">-10 000,00</div>
<div class="t" style="left:683.9599999999999px;top:870.86px;font-size:16.4px;line-height:16.4px;color:#000;">-10 000,00</div>
<div class="t" style="left:802.3199999999999px;top:870.86px;font-size:16.4px;line-height:16.4px;color:#000;">-10 000,00</div>
<div class="t" style="left:920.6799999999998px;top:870.86px;font-size:16.4px;line-height:16.4px;color:#000;">-10 000,00</div>
<div class="t" style="left:1039.04px;top:870.86px;font-size:16.4px;line-height:16.4px;color:#000;">-10 000,00</div>
<div class="t" style="left:1157.3999999999999px;top:870.86px;font-size:16.4px;line-height:16.4px;color:#000;">-10 000,00</div>
<div class="t" style="left:1275.76px;top:870.86px;font-size:16.4px;line-height:16.4px;color:#000;">-10 000,00</div>
<div class="t" style="left:1394.12px;top:870.86px;font-size:16.4px;line-height:16.4px;color:#000;">-10 000,00</div>
<div style="left:76.00px;top:895.14px;width:62.50px;height:28.54px;background:#fff;"></div>
<div class="t c" style="left:75.2px;width:63.3px;top:900.84px;font-size:16px;line-height:16px;color:#3a3a3a;">24</div>
<div style="left:138.50px;top:895.14px;width:1369.68px;height:28.54px;background:#ffffff;"></div>
<div style="left:76.00px;top:922.68px;width:62.50px;height:1.00px;background:#e2e2e2;"></div>
<div style="left:138.50px;top:922.68px;width:1369.68px;height:1.00px;background:#e2e2e2;"></div>
<div class="t" style="left:143.2px;top:901.87px;font-size:17.5px;line-height:17.5px;color:#000;">Прочие расходы</div>
<div class="t" style="left:565.5999999999999px;top:899.40px;font-size:16.4px;line-height:16.4px;color:#000;">-5 000,00</div>
<div class="t" style="left:683.9599999999999px;top:899.40px;font-size:16.4px;line-height:16.4px;color:#000;">-5 000,00</div>
<div class="t" style="left:802.3199999999999px;top:899.40px;font-size:16.4px;line-height:16.4px;color:#000;">-5 000,00</div>
<div class="t" style="left:920.6799999999998px;top:899.40px;font-size:16.4px;line-height:16.4px;color:#000;">-5 000,00</div>
<div class="t" style="left:1039.04px;top:899.40px;font-size:16.4px;line-height:16.4px;color:#000;">-5 000,00</div>
<div class="t" style="left:1157.3999999999999px;top:899.40px;font-size:16.4px;line-height:16.4px;color:#000;">-5 000,00</div>
<div class="t" style="left:1275.76px;top:899.40px;font-size:16.4px;line-height:16.4px;color:#000;">-5 000,00</div>
<div class="t" style="left:1394.12px;top:899.40px;font-size:16.4px;line-height:16.4px;color:#000;">-5 000,00</div>
<div style="left:76.00px;top:923.68px;width:62.50px;height:28.54px;background:#fff;"></div>
<div class="t c" style="left:75.2px;width:63.3px;top:929.38px;font-size:16px;line-height:16px;color:#3a3a3a;">25</div>
<div style="left:138.50px;top:923.68px;width:1369.68px;height:28.54px;background:#ffffff;"></div>
<div style="left:76.00px;top:951.22px;width:62.50px;height:1.00px;background:#e2e2e2;"></div>
<div style="left:138.50px;top:951.22px;width:1369.68px;height:1.00px;background:#e2e2e2;"></div>
<div class="t" style="left:143.2px;top:930.41px;font-size:17.5px;line-height:17.5px;color:#000;">РКО</div>
<div class="t" style="left:565.5999999999999px;top:927.94px;font-size:16.4px;line-height:16.4px;color:#000;">-10 000,00</div>
<div class="t" style="left:683.9599999999999px;top:927.94px;font-size:16.4px;line-height:16.4px;color:#000;">-10 000,00</div>
<div class="t" style="left:802.3199999999999px;top:927.94px;font-size:16.4px;line-height:16.4px;color:#000;">-10 000,00</div>
<div class="t" style="left:920.6799999999998px;top:927.94px;font-size:16.4px;line-height:16.4px;color:#000;">-10 000,00</div>
<div class="t" style="left:1039.04px;top:927.94px;font-size:16.4px;line-height:16.4px;color:#000;">-10 000,00</div>
<div class="t" style="left:1157.3999999999999px;top:927.94px;font-size:16.4px;line-height:16.4px;color:#000;">-10 000,00</div>
<div class="t" style="left:1275.76px;top:927.94px;font-size:16.4px;line-height:16.4px;color:#000;">-10 000,00</div>
<div class="t" style="left:1394.12px;top:927.94px;font-size:16.4px;line-height:16.4px;color:#000;">-10 000,00</div>
<div style="left:76.00px;top:952.22px;width:62.50px;height:28.54px;background:#fff;"></div>
<div class="t c" style="left:75.2px;width:63.3px;top:957.92px;font-size:16px;line-height:16px;color:#3a3a3a;">26</div>
<div style="left:138.50px;top:952.22px;width:1369.68px;height:28.54px;background:#ffffff;"></div>
<div style="left:76.00px;top:979.76px;width:62.50px;height:1.00px;background:#e2e2e2;"></div>
<div style="left:138.50px;top:979.76px;width:1369.68px;height:1.00px;background:#e2e2e2;"></div>
<div class="t" style="left:143.2px;top:958.95px;font-size:17.5px;line-height:17.5px;color:#000;">Возвраты</div>
<div class="t" style="left:565.5999999999999px;top:956.48px;font-size:16.4px;line-height:16.4px;color:#000;">0,00</div>
<div class="t" style="left:683.9599999999999px;top:956.48px;font-size:16.4px;line-height:16.4px;color:#000;">0,00</div>
<div class="t" style="left:802.3199999999999px;top:956.48px;font-size:16.4px;line-height:16.4px;color:#000;">0,00</div>
<div class="t" style="left:920.6799999999998px;top:956.48px;font-size:16.4px;line-height:16.4px;color:#000;">0,00</div>
<div class="t" style="left:1039.04px;top:956.48px;font-size:16.4px;line-height:16.4px;color:#000;">0,00</div>
<div class="t" style="left:1157.3999999999999px;top:956.48px;font-size:16.4px;line-height:16.4px;color:#000;">0,00</div>
<div class="t" style="left:1275.76px;top:956.48px;font-size:16.4px;line-height:16.4px;color:#000;">0,00</div>
<div class="t" style="left:1394.12px;top:956.48px;font-size:16.4px;line-height:16.4px;color:#000;">0,00</div>
<div style="left:76.00px;top:980.76px;width:62.50px;height:28.54px;background:#fff;"></div>
<div class="t c" style="left:75.2px;width:63.3px;top:986.46px;font-size:16px;line-height:16px;color:#3a3a3a;">27</div>
<div style="left:138.50px;top:980.76px;width:1369.68px;height:28.54px;background:#ffffff;"></div>
<div style="left:76.00px;top:1008.30px;width:62.50px;height:1.00px;background:#e2e2e2;"></div>
<div style="left:138.50px;top:1008.30px;width:1369.68px;height:1.00px;background:#e2e2e2;"></div>
<div class="t" style="left:143.2px;top:987.49px;font-size:17.5px;line-height:17.5px;color:#000;">Расходы на маркетинг</div>
<div class="t" style="left:565.5999999999999px;top:985.02px;font-size:16.4px;line-height:16.4px;color:#000;">-10 000,00</div>
<div class="t" style="left:683.9599999999999px;top:985.02px;font-size:16.4px;line-height:16.4px;color:#000;">-10 000,00</div>
<div class="t" style="left:802.3199999999999px;top:985.02px;font-size:16.4px;line-height:16.4px;color:#000;">-10 000,00</div>
<div class="t" style="left:920.6799999999998px;top:985.02px;font-size:16.4px;line-height:16.4px;color:#000;">-10 000,00</div>
<div class="t" style="left:1039.04px;top:985.02px;font-size:16.4px;line-height:16.4px;color:#000;">-10 000,00</div>
<div class="t" style="left:1157.3999999999999px;top:985.02px;font-size:16.4px;line-height:16.4px;color:#000;">-10 000,00</div>
<div class="t" style="left:1275.76px;top:985.02px;font-size:16.4px;line-height:16.4px;color:#000;">-10 000,00</div>
<div class="t" style="left:1394.12px;top:985.02px;font-size:16.4px;line-height:16.4px;color:#000;">-10 000,00</div>
<div style="left:137.80px;top:161.00px;width:1.50px;height:848.30px;background:#c7c7c7;"></div>
<div style="left:556.00px;top:162.00px;width:5.30px;height:847.30px;background:#c4c4c4;"></div>
<div style="left:76.00px;top:273.00px;width:1448.00px;height:6.00px;background:#c6c6c6;"></div>
<div style="left:679.00px;top:194.80px;width:1.00px;height:78.20px;background:#000;"></div>
<div style="left:679.00px;top:279.00px;width:1.00px;height:730.30px;background:#000;"></div>
<div style="left:798.00px;top:194.80px;width:1.00px;height:78.20px;background:#000;"></div>
<div style="left:798.00px;top:279.00px;width:1.00px;height:730.30px;background:#000;"></div>
<div style="left:916.00px;top:194.80px;width:1.00px;height:78.20px;background:#000;"></div>
<div style="left:916.00px;top:279.00px;width:1.00px;height:730.30px;background:#000;"></div>
<div style="left:1034.00px;top:194.80px;width:1.00px;height:78.20px;background:#000;"></div>
<div style="left:1034.00px;top:279.00px;width:1.00px;height:730.30px;background:#000;"></div>
<div style="left:1153.00px;top:194.80px;width:1.00px;height:78.20px;background:#000;"></div>
<div style="left:1153.00px;top:279.00px;width:1.00px;height:730.30px;background:#000;"></div>
<div style="left:1271.00px;top:194.80px;width:1.00px;height:78.20px;background:#000;"></div>
<div style="left:1271.00px;top:279.00px;width:1.00px;height:730.30px;background:#000;"></div>
<div style="left:1389.00px;top:194.80px;width:1.00px;height:78.20px;background:#000;"></div>
<div style="left:1389.00px;top:279.00px;width:1.00px;height:730.30px;background:#000;"></div>
<div style="left:1508.18px;top:194.80px;width:15.82px;height:815.30px;background:#fff;"></div>
<div style="left:1508.18px;top:162.00px;width:15.82px;height:111.00px;background:#f8f8f8;"></div>
<div style="left:1508.00px;top:162.00px;width:1.00px;height:848.30px;background:#e0e0e0;"></div>
<div style="left:1508.18px;top:273.00px;width:15.82px;height:6.00px;background:#dde4f0;"></div>
<div style="left:1510.20px;top:280.30px;width:11.80px;height:35.70px;background:#dadce0;border-radius:6px;"></div>
<div style="left:1508.18px;top:966.00px;width:15.82px;height:43.00px;background:#fff;border-top:1px solid #e6e6e6;border-left:1px solid #e6e6e6;box-sizing:border-box;"></div>
<div style="left:1508.18px;top:987.00px;width:15.82px;height:1.00px;background:#eee;"></div>
<svg style="position:absolute;left:1510px;top:970px" width="14" height="34"><path d="M2.5 9 L10.5 9 L6.5 4.5Z" fill="#b4b4b4"/><path d="M2.5 25 L10.5 25 L6.5 29.5Z" fill="#b4b4b4"/></svg>
<div style="left:76.00px;top:1009.30px;width:480.00px;height:17.20px;background:#f5f6f6;"></div>
<div style="left:556.00px;top:1009.30px;width:5.30px;height:17.20px;background:#c4c4c4;"></div>
<div style="left:561.30px;top:1009.30px;width:962.70px;height:17.20px;background:#fff;"></div>
<div style="left:76.00px;top:1009.30px;width:1448.00px;height:1.00px;background:#e2e2e2;"></div>
<div style="left:563.50px;top:1011.30px;width:597.00px;height:12.20px;background:#dadce0;border-radius:6px;"></div>
<div style="left:1464.50px;top:1009.30px;width:1.00px;height:17.20px;background:#e2e2e2;"></div>
<div style="left:1486.00px;top:1009.30px;width:1.00px;height:17.20px;background:#e2e2e2;"></div>
<div style="left:1508.00px;top:1009.30px;width:1.00px;height:17.20px;background:#e2e2e2;"></div>
<svg style="position:absolute;left:1468px;top:1011px" width="40" height="14"><path d="M9 3.5 L9 10.5 L5 7Z" fill="#9c9c9c"/><path d="M27.5 3.5 L27.5 10.5 L31.5 7Z" fill="#9c9c9c"/></svg>
<div style="left:76.00px;top:1026.50px;width:1448.00px;height:49.50px;background:#f9fbfd;border-radius:0 0 10px 10px;"></div>
<div style="left:76.00px;top:1026.00px;width:1448.00px;height:1.50px;background:#dcdcdc;"></div>
<svg style="position:absolute;left:149px;top:1046px" width="22" height="15"><path d="M1.4 1.5H20.1M1.4 6.8H20.1M1.4 12.1H20.1" stroke="#333" stroke-width="1.9"/></svg>
<div style="left:194.50px;top:1027.50px;width:278.30px;height:48.50px;background:#e1e9f7;"></div>
<div class="t" style="left:211px;top:1044.76px;font-size:18px;line-height:18px;color:#0b57d0;letter-spacing:1.8px;-webkit-text-stroke:0.6px #0b57d0;">ОПИУ: Сводный отчет</div>
<svg style="position:absolute;left:446px;top:1050px" width="14" height="8"><path d="M0.5 0.3 L11.5 0.3 L6 5.6Z" fill="#0b57d0"/></svg>
<div class="t" style="left:489.8px;top:1044.76px;font-size:18px;line-height:18px;color:#444;letter-spacing:1.36px;-webkit-text-stroke:0.35px #444;">ОПИУ: Постоянные / Переменные</div>
<svg style="position:absolute;left:832px;top:1050px" width="14" height="8"><path d="M0.5 0.3 L11.5 0.3 L6 5.6Z" fill="#444"/></svg>
<div style="left:878px;top:1035px;width:146px;height:34px;overflow:hidden;">
<div class="t" style="left:0.4px;top:9.76px;font-size:18px;line-height:18px;color:#444;letter-spacing:1.36px;-webkit-text-stroke:0.35px #444;">ОПИУ: Прямые затраты</div>
</div>
<div style="left:1024.00px;top:1039.50px;width:1.00px;height:25.50px;background:#999;"></div>
<svg style="position:absolute;left:1048px;top:1044px" width="70" height="18"><path d="M11.5 3.5 L6.5 9 L11.5 14.5" stroke="#c0c0c0" stroke-width="1.8" fill="none"/><path d="M58.5 3.5 L63.5 9 L58.5 14.5" stroke="#444" stroke-width="1.8" fill="none"/></svg>
<div style="left:1319.00px;top:1027.50px;width:1.20px;height:48.50px;background:#dcdcdc;"></div>
<div style="left:1320.20px;top:1027.50px;width:203.80px;height:48.50px;background:#fff;border-radius:0 0 10px 0;"></div>
<svg style="position:absolute;left:0;top:0" width="1600" height="1177"><path d="M1339.4 1042.8 H1355.8 Q1357 1042.8 1357 1044 V1059.9 Q1357 1061.1 1355.8 1061.1 H1350.5 L1347.6 1064.3 L1344.7 1061.1 H1339.4 Q1338.2 1061.1 1338.2 1059.9 V1044 Q1338.2 1042.8 1339.4 1042.8Z" fill="#109f56"/><path d="M1347.6 1045.3 Q1348.6 1050.6 1352.9 1051.9 Q1348.6 1053.2 1347.6 1058.5 Q1346.6 1053.2 1342.3 1051.9 Q1346.6 1050.6 1347.6 1045.3Z" fill="#fff"/></svg>
<div class="t" style="left:1378.3px;top:1045.95px;font-size:16.6px;line-height:16.6px;color:#139c55;-webkit-text-stroke:0.35px #139c55;">Анализ данных</div>
<svg style="position:absolute;left:110px;top:395px" width="270" height="70"><ellipse cx="133.6" cy="35.8" rx="124" ry="26.6" fill="none" stroke="#fc0d0d" stroke-width="2.9" transform="rotate(-0.6 133.6 35.8)"/></svg>
<svg style="position:absolute;left:0;top:0" width="1600" height="130">
<circle cx="111.5" cy="87" r="8.5" fill="#fe5f57"/>
<circle cx="139" cy="87" r="8.5" fill="#febc2e"/>
<circle cx="166.5" cy="87" r="8.5" fill="#28c840"/>
<rect x="210.2" y="76.8" width="24.8" height="19" rx="3.5" fill="none" stroke="#bcbcbc" stroke-width="1.7"/>
<path d="M219 77 V96" stroke="#bcbcbc" stroke-width="1.7"/>
<path d="M213 81.5H216.5M213 84.5H216.5M213 87.5H216.5" stroke="#bcbcbc" stroke-width="1.2"/>
<path d="M245.6 75 V98.7" stroke="#4a4a4a" stroke-width="1"/>
<path d="M254.5 84.5 L258.5 89 L262.5 84.5" stroke="#f0f0f0" stroke-width="2" fill="none" stroke-linecap="round" stroke-linejoin="round"/>
<path d="M309 77.5 L299.5 86.3 L309 95" stroke="#c8c8c8" stroke-width="2" fill="none" stroke-linecap="round" stroke-linejoin="round"/>
<path d="M348 77.5 L357.5 86.3 L348 95" stroke="#5f5f5f" stroke-width="2" fill="none" stroke-linecap="round" stroke-linejoin="round"/>
<path d="M426 75.5 Q420 75.5 414.5 78.5 Q414 91 426 98.5 Q438 91 437.5 78.5 Q432 75.5 426 75.5Z" fill="none" stroke="#3cc4f2" stroke-width="2.2" stroke-linejoin="round"/>
<path d="M423.6 81 V90.8 M427.6 81 V90.8" stroke="#3cc4f2" stroke-width="2.2"/>
<path d="M476.5 76 Q480.5 78.2 484.8 78.6 V86.5 Q484.8 93.5 476.5 97.6 Q468.2 93.5 468.2 86.5 V78.6 Q472.5 78.2 476.5 76Z" fill="none" stroke="#c6c6c6" stroke-width="1.8" stroke-linejoin="round"/>
<path d="M476.5 76 Q472.5 78.2 468.2 78.6 V86.5 Q468.2 93.5 476.5 97.6Z" fill="#c6c6c6"/>
<rect x="508.8" y="68.8" width="582.5" height="36.5" rx="10" fill="none" stroke="#4a4a4a" stroke-width="1.3"/>
<rect x="720.8" y="86.3" width="11.4" height="9.3" rx="1.6" fill="#e6e6e6"/>
<path d="M723.3 87 V83.8 Q723.3 80.3 726.5 80.3 Q729.7 80.3 729.7 83.8 V87" stroke="#e6e6e6" stroke-width="1.8" fill="none"/>
<path d="M1081 84.3 A6.8 6.8 0 1 1 1074.8 81.2" stroke="#d8d8d8" stroke-width="1.8" fill="none" stroke-linecap="round"/>
<path d="M1074.3 77.6 L1078 81.2 L1074.3 84.8" stroke="#d8d8d8" stroke-width="1.8" fill="none" stroke-linecap="round" stroke-linejoin="round"/>
<path d="M1379.5 82.5 H1377.5 Q1374.5 82.5 1374.5 85.5 V94.5 Q1374.5 97.5 1377.5 97.5 H1390.5 Q1393.5 97.5 1393.5 94.5 V85.5 Q1393.5 82.5 1390.5 82.5 H1388.5" stroke="#c4c4c4" stroke-width="1.8" fill="none"/>
<path d="M1384 89.5 V73.5 M1380 77.5 L1384 73.5 L1388 77.5" stroke="#c4c4c4" stroke-width="1.8" fill="none" stroke-linecap="round" stroke-linejoin="round"/>
<path d="M1433.8 77 V95 M1424.8 86 H1442.8" stroke="#c4c4c4" stroke-width="1.8"/>
<rect x="1474.5" y="75" width="15.5" height="16" rx="3" fill="none" stroke="#c4c4c4" stroke-width="1.7"/>
<rect x="1480" y="80" width="16" height="17" rx="3" fill="#333" stroke="#c4c4c4" stroke-width="1.7"/>
</svg>
<div class="t" style="left:741px;top:78.46px;font-size:18.6px;line-height:18.6px;color:#f4f4f4;-webkit-text-stroke:0.35px #f4f4f4;">docs.google.com</div>
</div></body></html>
